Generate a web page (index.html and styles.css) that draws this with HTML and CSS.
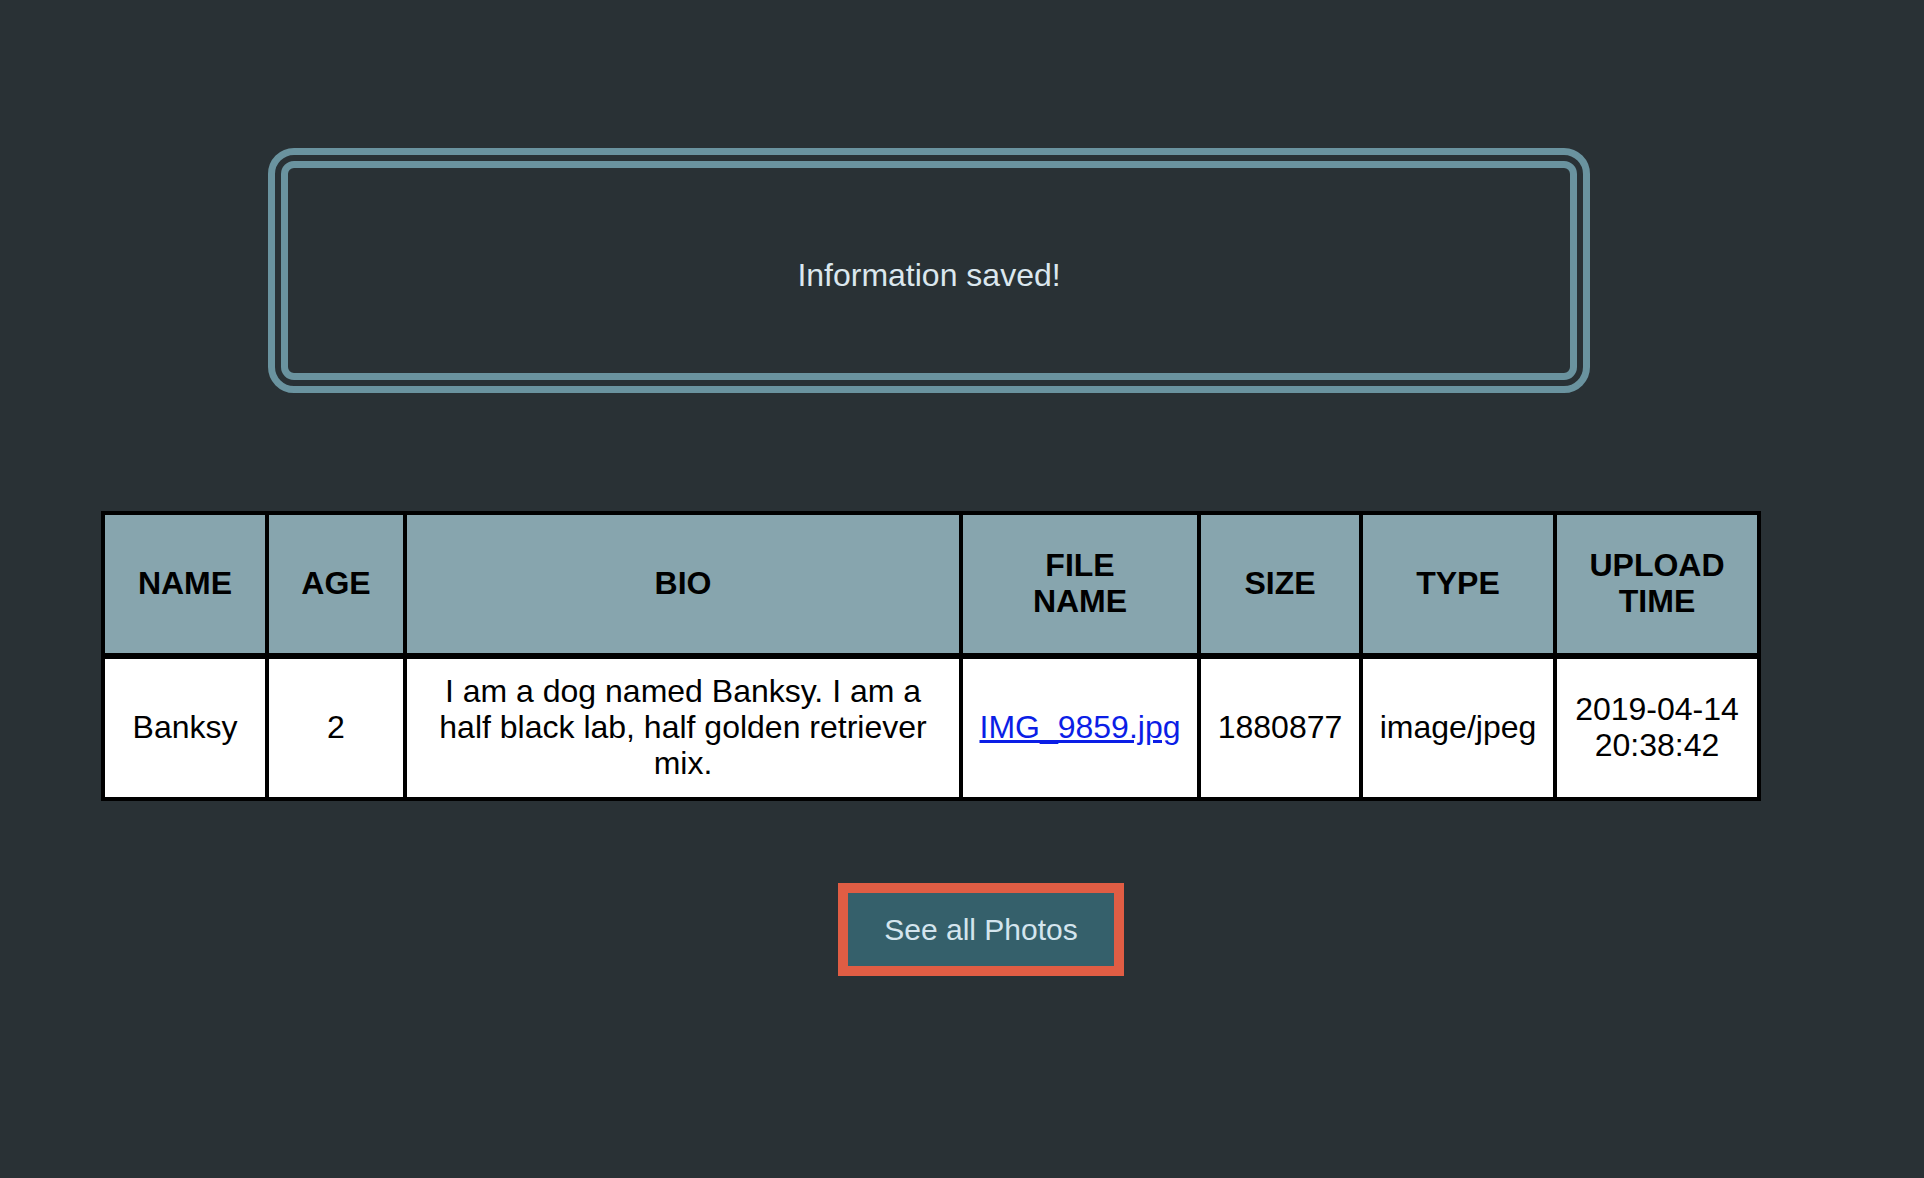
FILE: index.html
```html
<!DOCTYPE html>
<html>
<head>
<meta charset="utf-8">
<link rel="stylesheet" href="styles.css">
</head>
<body>
<main class="page">
  <div class="notice">Information saved!</div>
  <table class="info">
    <colgroup>
      <col class="c-name"><col class="c-age"><col class="c-bio"><col class="c-file"><col class="c-size"><col class="c-type"><col class="c-time">
    </colgroup>
    <thead>
      <tr>
        <th>NAME</th>
        <th>AGE</th>
        <th>BIO</th>
        <th>FILE<br>NAME</th>
        <th>SIZE</th>
        <th>TYPE</th>
        <th>UPLOAD<br>TIME</th>
      </tr>
    </thead>
    <tbody>
      <tr>
        <td>Banksy</td>
        <td>2</td>
        <td>I am a dog named Banksy. I am a half black lab, half golden retriever mix.</td>
        <td><a href="#">IMG_9859.jpg</a></td>
        <td>1880877</td>
        <td>image/jpeg</td>
        <td>2019-04-14<br>20:38:42</td>
      </tr>
    </tbody>
  </table>
  <a class="photos-btn" href="#">See all Photos</a>
</main>
</body>
</html>
```

FILE: styles.css
```css
html, body {
  margin: 0;
  padding: 0;
  background: #293135;
  height: 100%;
}
body {
  font-family: "Liberation Sans", Arial, Helvetica, sans-serif;
  font-size: 32px;
}
.page {
  display: flex;
  flex-direction: column;
  align-items: flex-start;
  padding-top: 148px;
}
.notice {
  box-sizing: border-box;
  margin-left: 268px;
  width: 1322px;
  height: 245px;
  padding-top: 10px;
  border: 20px double #6a939f;
  border-radius: 26px;
  color: #dbe7ee;
  display: flex;
  align-items: center;
  justify-content: center;
}
.info {
  margin-top: 118px;
  margin-left: 101px;
  border-collapse: collapse;
  table-layout: fixed;
  width: 1660px;
  border: 4px solid #000;
}
.c-name { width: 164px; }
.c-age { width: 138px; }
.c-bio { width: 556px; }
.c-file { width: 238px; }
.c-size { width: 162px; }
.c-type { width: 194px; }
.c-time { width: 204px; }
.info th, .info td {
  border: 4px solid #000;
  text-align: center;
  vertical-align: middle;
  padding: 0 14px;
  line-height: 36px;
}
.info th {
  background: #87a5ae;
  color: #000;
  font-weight: bold;
  height: 136px;
  padding-bottom: 2px;
  border-bottom-width: 6px;
}
.info td {
  background: #fff;
  color: #000;
  height: 136px;
  padding-bottom: 2px;
}
.info td a {
  color: #0b1ee6;
  text-decoration: underline;
}
.photos-btn {
  margin-top: 82px;
  margin-left: 838px;
  box-sizing: border-box;
  width: 286px;
  height: 93px;
  border: 10px solid #e05d44;
  background: #35606b;
  color: #d4e5ee;
  font-size: 30px;
  text-decoration: none;
  display: flex;
  align-items: center;
  justify-content: center;
}
```
